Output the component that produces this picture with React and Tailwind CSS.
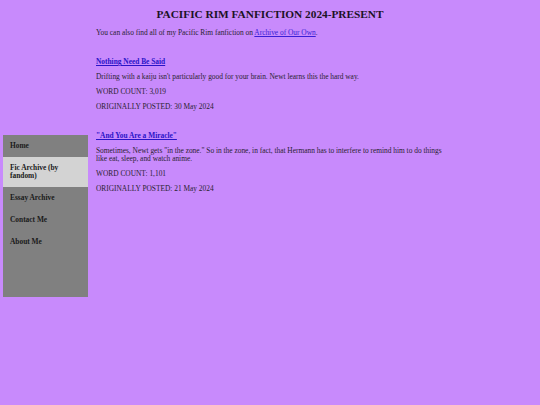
const fics = [
  {
    title: "Nothing Need Be Said",
    summary: "Drifting with a kaiju isn't particularly good for your brain. Newt learns this the hard way.",
    words: "3,019",
    posted: "30 May 2024",
  },
  {
    title: "\"And You Are a Miracle\"",
    summary:
      "Sometimes, Newt gets \"in the zone.\" So in the zone, in fact, that Hermann has to interfere to remind him to do things like eat, sleep, and watch anime.",
    words: "1,101",
    posted: "21 May 2024",
  },
];

const nav = [
  { label: "Home" },
  { label: "Fic Archive (by fandom)", active: true },
  { label: "Essay Archive" },
  { label: "Contact Me" },
  { label: "About Me" },
];

const App = () => {
  return (
    <div className="w-[540px] h-[405px] overflow-hidden bg-[#c88afc] text-[#2a1f30] font-['Liberation_Serif',serif] text-[7.4px] leading-[8px]">
      <h1 className="pt-[8px] text-center text-[11.3px] leading-[13px] font-bold text-[#1c1226]">
        PACIFIC RIM FANFICTION 2024-PRESENT
      </h1>
      <div className="flex items-start">
        <div className="ml-[3px] mt-[114px] w-[85px] h-[162px] bg-[#808080]">
          {nav.map((item) => (
            <div
              key={item.label}
              className={`px-[7px] py-[7px] font-bold text-[#1a1a1a] ${item.active ? "bg-[#d3d3d3]" : ""}`}
            >
              {item.label}
            </div>
          ))}
        </div>
        <div className="ml-[8px] w-[356px]">
          <p className="mt-[8px]">
            You can also find all of my Pacific Rim fanfiction on{" "}
            <a href="#" className="underline text-[#3a1fd6]">Archive of Our Own</a>.
          </p>
          {fics.map((fic) => (
            <div key={fic.title} className="mt-[21px]">
              <a href="#" className="block font-bold underline text-[#2a14c8]">{fic.title}</a>
              <p className="mt-[7px]">{fic.summary}</p>
              <p className="mt-[7px]">WORD COUNT: {fic.words}</p>
              <p className="mt-[7px]">ORIGINALLY POSTED: {fic.posted}</p>
            </div>
          ))}
        </div>
      </div>
    </div>
  );
};

export default App;
